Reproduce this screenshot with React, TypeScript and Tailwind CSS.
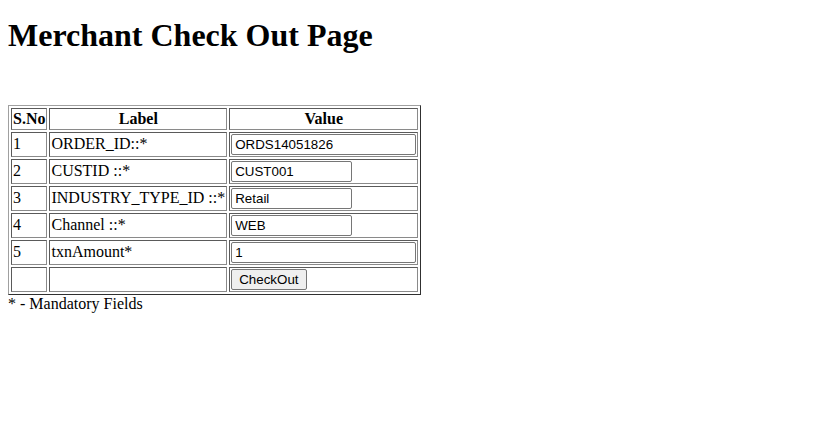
const rows = [
  { no: "1", label: "ORDER_ID::*", value: "ORDS14051826", wide: true },
  { no: "2", label: "CUSTID ::*", value: "CUST001", wide: false },
  { no: "3", label: "INDUSTRY_TYPE_ID ::*", value: "Retail", wide: false },
  { no: "4", label: "Channel ::*", value: "WEB", wide: false },
  { no: "5", label: "txnAmount*", value: "1", wide: true },
];

const cell =
  "p-px border border-t-[#5a5a5a] border-l-[#5a5a5a] border-b-[#8a8a8a] border-r-[#8a8a8a] align-baseline whitespace-nowrap";

const inputCls =
  "h-[21px] border border-[#767676] rounded-[2px] px-[3px] py-px text-[13.333px] leading-[normal] text-black bg-white font-['Liberation_Sans',Arial,sans-serif] outline-none";

export default function App() {
  return (
    <div className="min-h-[447px] bg-white text-black text-[16px] leading-[normal] px-2 font-['Liberation_Serif','Times_New_Roman',serif]">
      <h1 className="text-[32px] font-bold leading-[normal] pt-[17.44px]">Merchant Check Out Page</h1>
      <table className="mt-[50.76px] border-separate border-spacing-[2px] border border-t-[#a0a0a0] border-l-[#a0a0a0] border-b-[#303030] border-r-[#303030]">
        <thead>
          <tr>
            <th className={cell + " font-bold text-center"}>S.No</th>
            <th className={cell + " font-bold text-center"}>Label</th>
            <th className={cell + " font-bold text-center"}>Value</th>
          </tr>
        </thead>
        <tbody>
          {rows.map((r) => (
            <tr key={r.no}>
              <td className={cell}>{r.no}</td>
              <td className={cell}>{r.label}</td>
              <td className={cell}>
                <input
                  type="text"
                  defaultValue={r.value}
                  className={inputCls + (r.wide ? " w-[185px]" : " w-[121px]")}
                />
              </td>
            </tr>
          ))}
          <tr>
            <td className={cell}></td>
            <td className={cell}></td>
            <td className={cell}>
              <button
                type="button"
                className="h-[21px] px-[7px] py-px border border-[#767676] rounded-[2px] bg-[#efefef] text-[13.333px] leading-[normal] text-black font-['Liberation_Sans',Arial,sans-serif]"
              >
                CheckOut
              </button>
            </td>
          </tr>
        </tbody>
      </table>
      <div>* - Mandatory Fields</div>
    </div>
  );
}
